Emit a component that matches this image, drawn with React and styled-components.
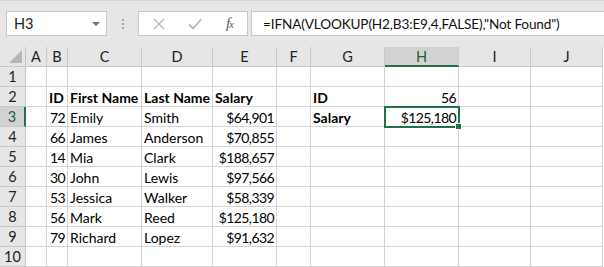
import React from "react";
import styled, { createGlobalStyle } from "styled-components";

const GlobalStyle = createGlobalStyle`
    html, body {
        margin: 0;
        padding: 0;
        background: #ffffff;
    }
    body {
        font-family: "Lato", "Liberation Sans", sans-serif;
        overflow: hidden;
    }
`;

const columns = [
    { name: "A", width: 21 },
    { name: "B", width: 21 },
    { name: "C", width: 74 },
    { name: "D", width: 71 },
    { name: "E", width: 64 },
    { name: "F", width: 34 },
    { name: "G", width: 74 },
    { name: "H", width: 74 },
    { name: "I", width: 72 },
    { name: "J", width: 72 },
];

// row data: cells keyed by column, b = bold, r = right aligned (numbers)
const rows = [
    {},
    {
        B: { v: "ID", b: true },
        C: { v: "First Name", b: true },
        D: { v: "Last Name", b: true },
        E: { v: "Salary", b: true },
        G: { v: "ID", b: true },
        H: { v: "56", r: true },
    },
    {
        B: { v: "72", r: true },
        C: { v: "Emily" },
        D: { v: "Smith" },
        E: { v: "$64,901", r: true },
        G: { v: "Salary", b: true },
        H: { v: "$125,180", r: true },
    },
    { B: { v: "66", r: true }, C: { v: "James" }, D: { v: "Anderson" }, E: { v: "$70,855", r: true } },
    { B: { v: "14", r: true }, C: { v: "Mia" }, D: { v: "Clark" }, E: { v: "$188,657", r: true } },
    { B: { v: "30", r: true }, C: { v: "John" }, D: { v: "Lewis" }, E: { v: "$97,566", r: true } },
    { B: { v: "53", r: true }, C: { v: "Jessica" }, D: { v: "Walker" }, E: { v: "$58,339", r: true } },
    { B: { v: "56", r: true }, C: { v: "Mark" }, D: { v: "Reed" }, E: { v: "$125,180", r: true } },
    { B: { v: "79", r: true }, C: { v: "Richard" }, D: { v: "Lopez" }, E: { v: "$91,632", r: true } },
    {},
];

const ACTIVE_COL = "H";
const ACTIVE_ROW = 3;

const App = () => (
    <Page>
        <GlobalStyle />
        <FormulaBar>
            <NameBox>
                <NameText>H3</NameText>
                <DropArrow />
            </NameBox>
            <Grip>
                <Dot />
                <Dot />
                <Dot />
            </Grip>
            <IconBox>
                <svg width="12" height="12" viewBox="0 0 12 12">
                    <path d="M1 1 L11 11 M11 1 L1 11" stroke="#b8b8b8" strokeWidth="1.4" fill="none" />
                </svg>
                <svg width="14" height="12" viewBox="0 0 14 12">
                    <path d="M1 6.5 L5 10.5 L13 1.5" stroke="#b8b8b8" strokeWidth="1.8" fill="none" />
                </svg>
                <Fx>
                    f<sub>x</sub>
                </Fx>
            </IconBox>
            <FormulaInput>=IFNA(VLOOKUP(H2,B3:E9,4,FALSE),"Not Found")</FormulaInput>
        </FormulaBar>
        <SheetArea>
            <Sheet>
                <Corner>
                    <svg width="13" height="13" viewBox="0 0 13 13">
                        <path d="M13 0 L13 13 L0 13 Z" fill="#b5b5b5" />
                    </svg>
                </Corner>
                {columns.map((c) => (
                    <ColHeader key={c.name} $active={c.name === ACTIVE_COL}>
                        {c.name}
                    </ColHeader>
                ))}
                {rows.map((row, i) => (
                    <React.Fragment key={i}>
                        <RowHeader $active={i + 1 === ACTIVE_ROW}>{i + 1}</RowHeader>
                        {columns.map((c) => {
                            const cell = row[c.name];
                            return (
                                <Cell key={c.name} $bold={cell?.b} $right={cell?.r}>
                                    {cell?.v}
                                </Cell>
                            );
                        })}
                    </React.Fragment>
                ))}
            </Sheet>
            <Selection>
                <FillHandle />
            </Selection>
        </SheetArea>
    </Page>
);

export default App;

const Page = styled.div`
    width: 604px;
    height: 267px;
    background: #ffffff;
    overflow: hidden;
`;

const FormulaBar = styled.div`
    height: 47px;
    box-sizing: border-box;
    background: #e6e6e6;
    border-top: 1px solid #d6d6d6;
    display: flex;
    align-items: flex-start;
    padding: 10px 0 0 6px;
`;

const NameBox = styled.div`
    width: 101px;
    height: 25px;
    box-sizing: border-box;
    background: #ffffff;
    border: 1px solid #c6c6c6;
    display: flex;
    align-items: center;
    justify-content: space-between;
    padding: 0 6px 0 7px;
`;

const NameText = styled.span`
    font-size: 14.5px;
    color: #222;
`;

const DropArrow = styled.span`
    width: 0;
    height: 0;
    border-left: 4px solid transparent;
    border-right: 4px solid transparent;
    border-top: 4px solid #6e6e6e;
`;

const Grip = styled.div`
    width: 31px;
    height: 25px;
    display: flex;
    flex-direction: column;
    align-items: center;
    justify-content: center;
    gap: 2px;
`;

const Dot = styled.span`
    width: 2px;
    height: 2px;
    background: #a6a6a6;
`;

const IconBox = styled.div`
    width: 110px;
    height: 25px;
    box-sizing: border-box;
    background: #ffffff;
    border: 1px solid #c6c6c6;
    display: flex;
    align-items: center;
    justify-content: space-between;
    padding: 0 14px 0 14px;
`;

const Fx = styled.span`
    font-family: "Liberation Serif", "DejaVu Serif", serif;
    font-style: italic;
    font-size: 15px;
    color: #555;
    letter-spacing: -1px;
    sub {
        font-size: 11px;
        vertical-align: 0;
    }
`;

const FormulaInput = styled.div`
    flex: 1;
    margin-left: 3px;
    height: 25px;
    box-sizing: border-box;
    background: #ffffff;
    border: 1px solid #c6c6c6;
    border-right: none;
    display: flex;
    align-items: center;
    padding-left: 11px;
    font-size: 13.6px;
    letter-spacing: -0.15px;
    color: #111;
    white-space: nowrap;
`;

const SheetArea = styled.div`
    position: relative;
`;

const Sheet = styled.div`
    display: grid;
    grid-template-columns: 26px ${columns.map((c) => `${c.width}px`).join(" ")};
    grid-auto-rows: 20px;
    font-size: 14px;
`;

const Corner = styled.div`
    background: #e6e6e6;
    border-right: 1px solid #c6c6c6;
    border-bottom: 1px solid #c6c6c6;
    display: flex;
    align-items: flex-end;
    justify-content: flex-end;
    padding: 0 3px 3px 0;
    box-sizing: border-box;
`;

const ColHeader = styled.div`
    background: ${(p) => (p.$active ? "#d2d2d2" : "#e6e6e6")};
    border-right: 1px solid #c8c8c8;
    border-bottom: ${(p) => (p.$active ? "2px solid #217346" : "1px solid #c6c6c6")};
    color: ${(p) => (p.$active ? "#1e5e3a" : "#222")};
    font-size: 14.5px;
    box-sizing: border-box;
    display: flex;
    align-items: center;
    justify-content: center;
    padding-top: ${(p) => (p.$active ? "1px" : "0")};
`;

const RowHeader = styled.div`
    background: ${(p) => (p.$active ? "#d2d2d2" : "#e6e6e6")};
    border-right: ${(p) => (p.$active ? "2px solid #217346" : "1px solid #c6c6c6")};
    border-bottom: 1px solid #c8c8c8;
    color: ${(p) => (p.$active ? "#1e5e3a" : "#222")};
    font-size: 14.5px;
    box-sizing: border-box;
    display: flex;
    align-items: center;
    justify-content: center;
`;

const Cell = styled.div`
    border-right: 1px solid #d4d4d4;
    border-bottom: 1px solid #d4d4d4;
    box-sizing: border-box;
    display: flex;
    align-items: center;
    justify-content: ${(p) => (p.$right ? "flex-end" : "flex-start")};
    padding: 1px 2px 0 2px;
    font-weight: ${(p) => (p.$bold ? 700 : 400)};
    letter-spacing: ${(p) => (p.$right ? "-0.6px" : "0")};
    color: #000;
    white-space: nowrap;
`;

const Selection = styled.div`
    position: absolute;
    left: 384px;
    top: 59px;
    width: 76px;
    height: 22px;
    box-sizing: border-box;
    border: 2px solid #217346;
    pointer-events: none;
`;

const FillHandle = styled.span`
    position: absolute;
    right: -4px;
    bottom: -4px;
    width: 5px;
    height: 5px;
    background: #217346;
    border: 1px solid #ffffff;
`;
